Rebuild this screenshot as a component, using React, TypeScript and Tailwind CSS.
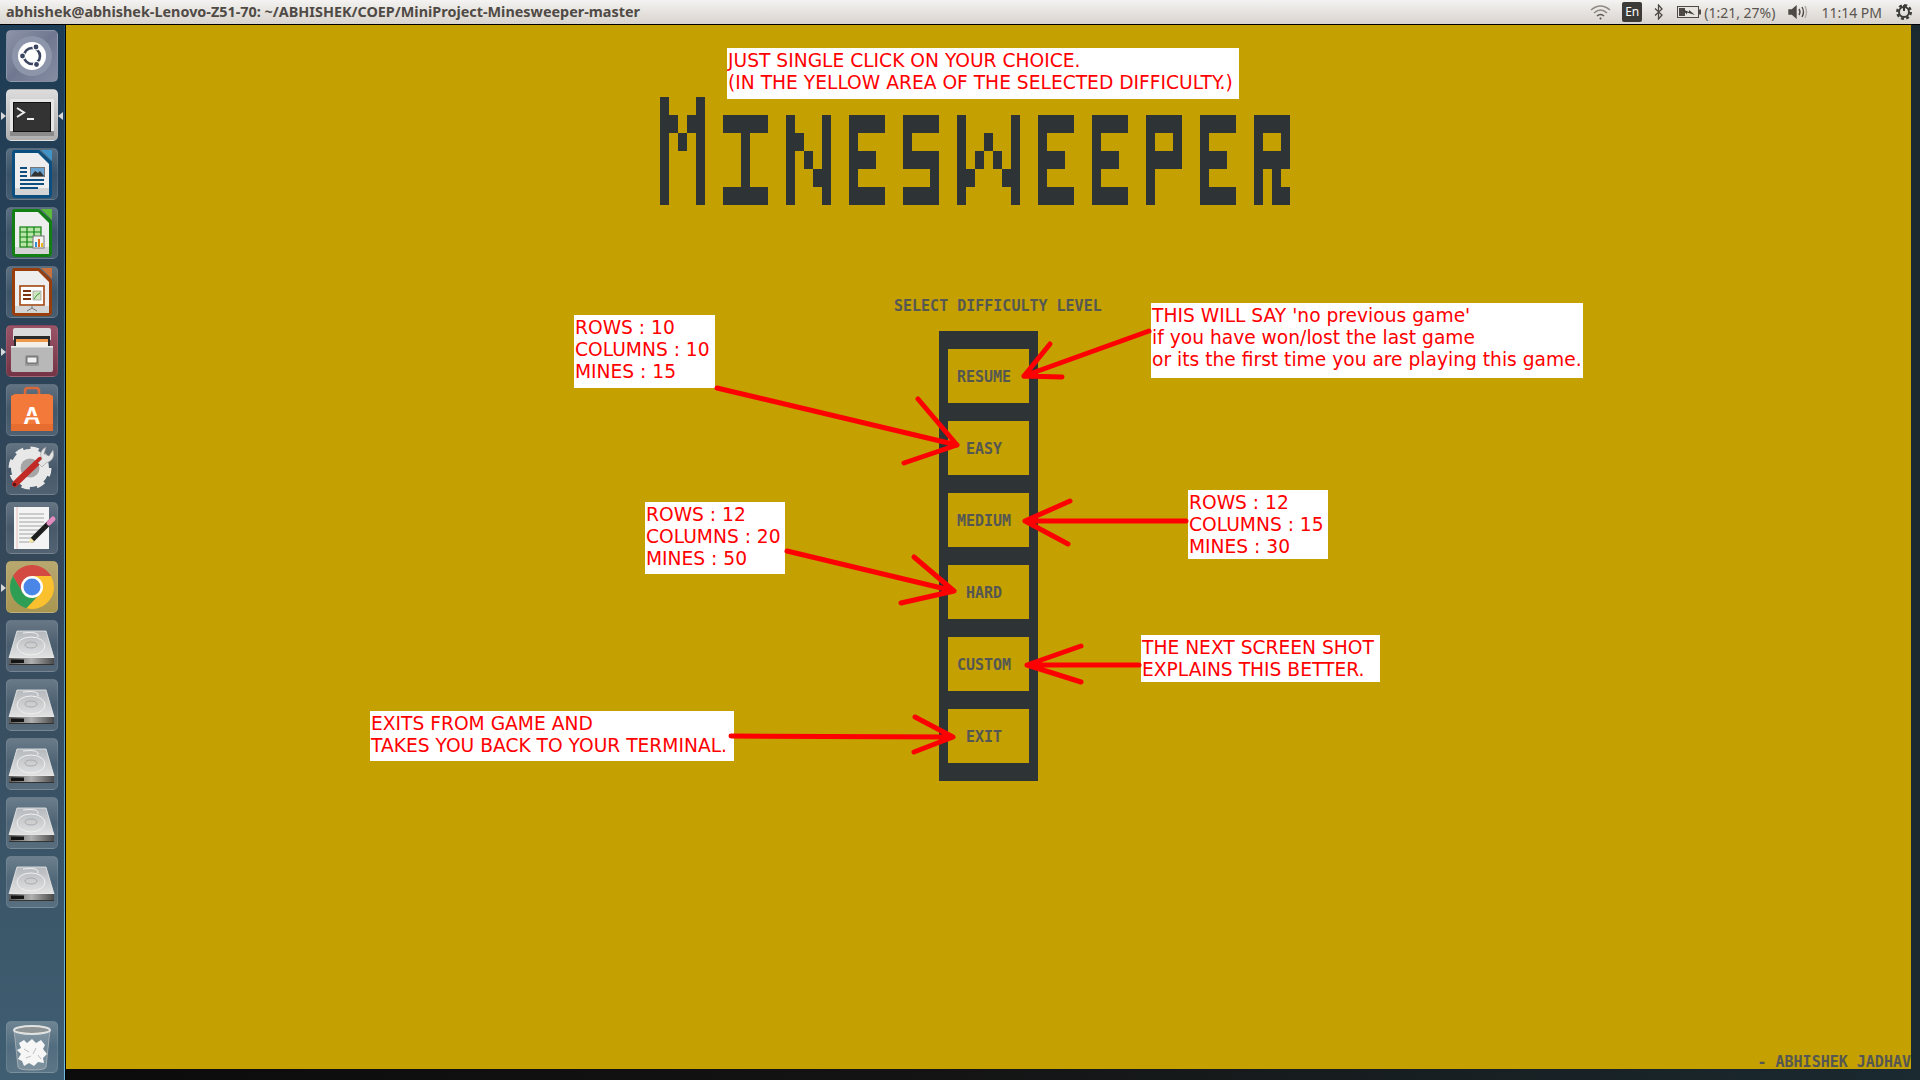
import React from 'react';

const GLYPHS: Record<string, string[]> = {
  M: ['#...#', '##.##', '#.#.#', '#...#', '#...#', '#...#'],
  I: ['.....', '#####', '..#..', '..#..', '..#..', '#####'],
  N: ['.....', '#...#', '##..#', '#.#.#', '#..##', '#...#'],
  E: ['....', '####', '#...', '###.', '#...', '####'],
  S: ['....', '####', '#...', '####', '...#', '####'],
  W: ['.......', '#.....#', '#..#..#', '#.#.#.#', '##...##', '#.....#'],
  P: ['....', '####', '#..#', '####', '#...', '#...'],
  R: ['....', '####', '#..#', '####', '#.#.', '#.##'],
};

const word = 'MINESWEEPER'.split('');
const titleCells = [0, 1, 2, 3, 4, 5]
  .map((row) => word.map((ch) => GLYPHS[ch][row]).join('..'))
  .join('')
  .split('');

const MENU = ['RESUME', 'EASY', 'MEDIUM', 'HARD', 'CUSTOM', 'EXIT'];

const ARROWS = [
  'M1149 331 L1024 376 M1024 376 L1050 344 M1024 376 L1062 377',
  'M717 388 L957 445 M957 445 L918 399 M957 445 L904 463',
  'M1186 521 L1025 521 M1025 521 L1070 501 M1025 521 L1068 544',
  'M787 551 L954 591 M954 591 L914 557 M954 591 L901 603',
  'M1139 665 L1027 665 M1027 665 L1081 646 M1027 665 L1081 682',
  'M731 736 L953 737 M953 737 L915 717 M953 737 L914 752',
];

const Note: React.FC<{ className: string; children: React.ReactNode }> = ({ className, children }) => (
  <div className={`absolute bg-white text-[#ff0000] font-['DejaVu_Sans',sans-serif] text-[18.67px] leading-[22px] whitespace-pre ${className}`}>
    {children}
  </div>
);

const Tile: React.FC<{ tone?: string; pip?: boolean; rpip?: boolean; children: React.ReactNode }> = ({ tone, pip, rpip, children }) => (
  <div className={`relative w-[52px] h-[52px] shrink-0 rounded-[5px] border border-white/10 ${tone ?? 'bg-linear-to-b from-white/25 via-white/10 to-white/15'}`}>
    {pip && <div className="absolute left-[-6px] top-[22px] border-y-[4px] border-y-transparent border-l-[5px] border-l-[#d8d8d8]" />}
    {rpip && <div className="absolute right-[-6px] top-[22px] border-y-[4px] border-y-transparent border-r-[5px] border-r-[#d8d8d8]" />}
    <svg viewBox="0 0 52 52" className="absolute left-[-1px] top-[-1px] w-[52px] h-[52px]">{children}</svg>
  </div>
);

const Doc: React.FC<{ frame: string; corner: string; children: React.ReactNode }> = ({ frame, corner, children }) => (
  <>
    <path d="M8 2 H33 L46 14 V46 Q46 50 42 50 H10 Q6 50 6 46 V6 Q6 2 8 2Z" fill={frame} />
    <path d="M35 2 H46 V13Z" fill={corner} />
    <path d="M9 5 H32 L43 16 V47 H9Z" fill="#eeeeee" />
    <path d="M9 40 H43 V47 H9Z" fill="#d4d4d4" />
    {children}
  </>
);

const Hdd = () => (
  <>
    <defs>
      <linearGradient id="hddPlate" x1="0" y1="0" x2="0" y2="1">
        <stop offset="0" stopColor="#b4b8bc" />
        <stop offset="1" stopColor="#e2e2e2" />
      </linearGradient>
      <linearGradient id="hddBase" x1="0" y1="0" x2="1" y2="0">
        <stop offset="0" stopColor="#5a5a5a" />
        <stop offset="0.5" stopColor="#b0b0b0" />
        <stop offset="1" stopColor="#4a4a4a" />
      </linearGradient>
    </defs>
    <path d="M11 11 H40 L48 38 H3Z" fill="url(#hddPlate)" />
    <path d="M11 11 H40 L48 38 H3Z" fill="none" stroke="#eeeeee" strokeWidth="0.8" />
    <ellipse cx="25" cy="26" rx="14" ry="9" fill="none" stroke="#f0f0f0" strokeWidth="1" />
    <ellipse cx="25" cy="25" rx="6" ry="3" fill="none" stroke="#a8aaac" strokeWidth="1" />
    <path d="M17 13 Q34 11 32 17" fill="none" stroke="#f0f0f0" strokeWidth="1" />
    <rect x="3" y="38" width="45" height="6" fill="url(#hddBase)" />
    <rect x="5" y="39.5" width="13" height="3.5" fill="#141414" />
    <rect x="3" y="44" width="45" height="1" fill="#333" />
  </>
);

const Launcher = () => (
  <div className="flex h-full shrink-0">
    <div className="w-16 h-full flex flex-col items-center gap-[7px] pt-[5px] pb-[7px] bg-linear-to-b from-[#1d3c55] via-[#35485a] to-[#3f5e72]">
      <Tile tone="bg-linear-to-br from-[#8e94a8] via-[#6f7890] to-[#858da2]">
        <circle cx="26" cy="26" r="20" fill="#8d95aa" />
        <circle cx="26" cy="26" r="14" fill="#fff" />
        <circle cx="26" cy="26" r="8" fill="none" stroke="#3b4560" strokeWidth="2.6" />
        <circle cx="30" cy="17" r="3.6" fill="#fff" />
        <circle cx="30" cy="17" r="2.4" fill="#3b4560" />
        <circle cx="16.5" cy="26" r="3.6" fill="#fff" />
        <circle cx="16.5" cy="26" r="2.4" fill="#3b4560" />
        <circle cx="30.5" cy="34.5" r="3.6" fill="#fff" />
        <circle cx="30.5" cy="34.5" r="2.4" fill="#3b4560" />
      </Tile>
      <Tile tone="bg-linear-to-b from-[#dcdcdc] to-[#aeaeae]" pip rpip>
        <rect x="4" y="10" width="44" height="37" rx="1" fill="#e6e6e6" />
        <rect x="4" y="42" width="44" height="5" fill="#8a8a8a" />
        <rect x="7" y="13" width="38" height="30" fill="#111" />
        <rect x="8" y="14" width="36" height="28" fill="#333" />
        <path d="M11 19 L18 23.5 L11 28" fill="none" stroke="#eee" strokeWidth="2" />
        <rect x="21" y="29" width="7" height="2" fill="#eee" />
      </Tile>
      <Tile>
        <Doc frame="#0b4f80" corner="#3f93c6">
          <path d="M14 20 H21 M14 24 H21 M14 28 H21 M14 32 H38 M14 36 H38 M14 40 H32" stroke="#0f4f80" strokeWidth="2" />
          <rect x="24.5" y="19.5" width="14" height="9" fill="#6aa4d0" stroke="#777" />
          <path d="M25 28 L29 23 L32 25 L34 23 L38 28Z" fill="#333" />
        </Doc>
      </Tile>
      <Tile>
        <Doc frame="#127f12" corner="#5dbb3c">
          <rect x="14" y="20" width="21" height="20" fill="#b8e6a8" stroke="#128012" strokeWidth="1.2" />
          <path d="M14 25 H35 M14 30 H35 M14 35 H35 M21 20 V40 M28 20 V40" stroke="#128012" strokeWidth="1.2" />
          <rect x="27" y="29" width="11" height="12" fill="#f2f2f2" stroke="#777" />
          <rect x="29" y="35" width="2" height="5" fill="#2d8fd0" />
          <rect x="32" y="32" width="2" height="8" fill="#e06b20" />
          <rect x="35" y="36" width="2" height="4" fill="#e8b820" />
        </Doc>
      </Tile>
      <Tile>
        <Doc frame="#983d0c" corner="#c8713c">
          <rect x="14" y="20" width="24" height="19" fill="#fff" stroke="#a3460f" strokeWidth="1.6" />
          <path d="M17 25 H25 M17 29 H25 M17 33 H25" stroke="#7c3410" strokeWidth="2" />
          <rect x="27" y="25" width="8" height="9" fill="#cfe4c0" stroke="#888" strokeWidth="0.6" />
          <path d="M28 33 L31 29 L34 27" stroke="#3d9a34" strokeWidth="1" fill="none" />
          <path d="M26 39 V42 M26 42 L21 45 M26 42 L31 45" stroke="#777" strokeWidth="1" fill="none" />
        </Doc>
      </Tile>
      <Tile tone="bg-linear-to-b from-[#9a5468] to-[#743446]" pip>
        <path d="M7 5 Q7 3 9 3 H43 Q45 3 45 5 V15 H7Z" fill="#dadada" />
        <rect x="8" y="11" width="36" height="11" fill="#2a2a2a" />
        <rect x="10" y="14" width="32" height="3" fill="#ee9a4a" />
        <rect x="10" y="17" width="32" height="4" fill="#f4f0e8" />
        <path d="M5 22 H47 V45 Q47 47 45 47 H7 Q5 47 5 45Z" fill="#b8b8b8" />
        <rect x="5" y="21" width="42" height="1.5" fill="#eee" />
        <rect x="19" y="30" width="14" height="11" rx="1.5" fill="#999" />
        <rect x="21" y="32" width="10" height="6" fill="#f0f0f0" stroke="#444" strokeWidth="0.7" />
      </Tile>
      <Tile>
        <path d="M19 14 V7 Q19 4 22 4 H30 Q33 4 33 7 V14" fill="none" stroke="#d8693a" strokeWidth="2.6" />
        <path d="M5 12 L9 10 H43 L47 12 V47 H5Z" fill="#f2793a" />
        <rect x="5" y="40" width="42" height="7" fill="#e66c30" />
        <text x="26" y="40" textAnchor="middle" fill="#fff" fontSize="24" fontWeight="700" fontFamily="'Liberation Sans',sans-serif">A</text>
        <rect x="15" y="32" width="22" height="1.4" fill="#f2793a" />
      </Tile>
      <Tile>
        <circle cx="24" cy="25" r="14" fill="none" stroke="#e8e8e8" strokeWidth="10" />
        <circle cx="24" cy="25" r="19" fill="none" stroke="#e8e8e8" strokeWidth="5" strokeDasharray="8 6.9" />
        <circle cx="24" cy="25" r="9.5" fill="#a6a6a6" />
        <path d="M9 41 L34 17" stroke="#c22a26" strokeWidth="6" strokeLinecap="round" />
        <circle cx="8.5" cy="41.5" r="1.8" fill="#5a1414" />
        <path d="M32 20 L36 16 Q32 8 40 4 L38 11 L43 13 L47 7 Q50 17 40 20 L36 24Z" fill="#e4e4e4" stroke="#999" strokeWidth="0.6" />
      </Tile>
      <Tile>
        <rect x="8" y="5" width="35" height="42" fill="#f4f4f4" />
        <path d="M11 5 V47" stroke="#e8b0b0" strokeWidth="0.8" />
        <path d="M13 12 H38 M13 16 H38 M13 20 H38 M13 24 H38 M13 28 H34 M13 32 H30 M13 36 H25 M13 40 H28" stroke="#8f8f8f" strokeWidth="0.8" />
        <path d="M26 38 L46 18" stroke="#1e1e1e" strokeWidth="5" />
        <path d="M43 21 L47 17" stroke="#e28cc0" strokeWidth="5" strokeLinecap="round" />
        <path d="M23 41 L24.5 35.5 L28.5 39.5Z" fill="#f4e6a0" />
      </Tile>
      <Tile tone="bg-linear-to-b from-[#b8a870] to-[#a89650]" pip>
        <path d="M26 15 H45.05 A22 22 0 0 0 6.95 15 L16.5 31.5 L26 26Z" fill="#d24a41" />
        <path d="M45.05 15 A22 22 0 0 1 20.3 47.2 L35.5 31 L26 15Z" fill="#fbc02d" />
        <path d="M6.95 15 A22 22 0 0 0 20.3 47.2 L35.5 31 L26 37 L16.5 31.5Z" fill="#2e9e54" />
        <circle cx="26" cy="26" r="11" fill="#fff" />
        <circle cx="26" cy="26" r="8.5" fill="#4a86e8" />
      </Tile>
      <Tile><Hdd /></Tile>
      <Tile><Hdd /></Tile>
      <Tile><Hdd /></Tile>
      <Tile><Hdd /></Tile>
      <Tile><Hdd /></Tile>
      <div className="mt-auto">
        <Tile>
          <path d="M8 9 L12 46 Q12 49 26 49 Q40 49 40 46 L44 9Z" fill="#ffffff" fillOpacity="0.2" stroke="#c8c8c8" strokeOpacity="0.6" />
          <path d="M13 22 L18 19 L21 22 L26 18 L30 22 L35 19 L39 24 L37 28 L41 33 L37 37 L38 42 L32 41 L28 45 L23 42 L18 45 L16 40 L12 38 L15 33 L11 29 L15 27Z" fill="#f6f6f6" />
          <path d="M18 28 L23 31 M30 27 L27 33 M20 37 L25 35 M32 34 L35 38" stroke="#bdbdbd" strokeWidth="1" />
          <ellipse cx="26" cy="9" rx="18" ry="4" fill="#8f9496" stroke="#e2e2e2" strokeWidth="2" />
        </Tile>
      </div>
    </div>
    <div className="w-px h-full bg-linear-to-b from-[#1f4f70] via-[#4e8fae] to-[#6cc0de]" />
    <div className="w-px h-full bg-black" />
  </div>
);

const TopPanel = () => (
  <div className="h-[25px] shrink-0 flex items-center bg-linear-to-b from-[#f4f3f1] to-[#d8d3cd] border-b border-black font-['Noto_Sans',sans-serif] text-[#5a5550]">
    <div className="ml-[6px] text-[14.4px] font-bold text-[#4f4a45] whitespace-nowrap">abhishek@abhishek-Lenovo-Z51-70: ~/ABHISHEK/COEP/MiniProject-Minesweeper-master</div>
    <div className="ml-auto flex items-center pr-[8px] text-[14px] whitespace-nowrap">
      <svg viewBox="0 0 21 16" className="w-[21px] h-[16px]" fill="none" stroke="#8f8a84" strokeWidth="1.6">
        <path d="M1 6 Q10.5 -2 20 6" />
        <path d="M4 9 Q10.5 3 17 9" />
        <path d="M7 12 Q10.5 9 14 12" stroke="#5a5550" />
        <circle cx="10.5" cy="14.5" r="1" fill="#4f4a45" stroke="none" />
      </svg>
      <div className="ml-[11px] w-[20px] h-[20px] rounded-[2px] bg-[#3c3b37] text-white text-[12px] flex items-center justify-center">En</div>
      <svg viewBox="0 0 9 16" className="ml-[12px] w-[9px] h-[16px]" fill="none" stroke="#4f4a45" strokeWidth="1.3">
        <path d="M1 4.5 L8 11 L4.5 15 V1 L8 5 L1 11.5" />
      </svg>
      <svg viewBox="0 0 25 12" className="ml-[14px] w-[25px] h-[12px]">
        <rect x="0.5" y="0.5" width="21" height="11" fill="#e8e5e1" stroke="#4f4a45" />
        <rect x="2" y="2" width="6" height="8" fill="#4f4a45" />
        <path d="M5 3 L12 6 L12 4 L18 9 L10 6.5 L10 8.5Z" fill="#3c3b37" />
        <rect x="22" y="3.5" width="2" height="5" fill="#4f4a45" />
      </svg>
      <span className="ml-[2px]">(1:21, 27%)</span>
      <svg viewBox="0 0 20 14" className="ml-[13px] w-[20px] h-[14px]" fill="none" stroke="#4f4a45" strokeWidth="1.4">
        <path d="M1 5 H4 L8 1.5 V12.5 L4 9 H1Z" fill="#4f4a45" />
        <path d="M11 4 Q13 7 11 10" />
        <path d="M14 2 Q17 7 14 12" />
        <path d="M17 1 Q20 7 17 13" stroke="#b0aba5" />
      </svg>
      <span className="ml-[13px]">11:14 PM</span>
      <svg viewBox="0 0 16 16" className="ml-[14px] w-[16px] h-[16px]" fill="none" stroke="#3c3b37">
        <circle cx="8" cy="8" r="5" strokeWidth="2" />
        <circle cx="8" cy="8" r="6.8" strokeWidth="2.4" strokeDasharray="3 2.34" />
        <path d="M8 1 V7" strokeWidth="2" />
      </svg>
    </div>
  </div>
);

export default function App() {
  return (
    <div className="relative w-[1920px] h-[1080px] overflow-hidden flex flex-col bg-linear-to-r from-[#0b0b0b] via-[#141414] to-[#1a2a30]">
      <TopPanel />
      <div className="flex-1 min-h-0 flex">
        <Launcher />
        <div className="flex-1 min-w-0 h-[1044px] mr-[9px] flex flex-col bg-[#c4a000] font-['DejaVu_Sans_Mono',monospace] font-bold text-[15px] leading-[18px] text-[#555753]">
          <div role="img" aria-label="MINESWEEPER" className="mt-[72px] ml-[594px] w-[630px] grid grid-cols-[repeat(70,minmax(0,1fr))] auto-rows-[18px]">
            {titleCells.map((c, i) => (
              <div key={i} className={c === '#' ? 'bg-[#2e3436]' : ''} />
            ))}
          </div>
          <div className="mt-[92px] ml-[828px] whitespace-pre">SELECT DIFFICULTY LEVEL</div>
          <div className="mt-[16px] self-center w-[99px] flex flex-col gap-[18px] py-[18px] px-[9px] bg-[#2e3436]">
            {MENU.map((label) => (
              <div key={label} className="h-[54px] pr-[9px] pt-[2px] flex items-center justify-center bg-[#c4a000]">{label}</div>
            ))}
          </div>
          <div className="mt-auto self-end h-[16px] whitespace-pre">- ABHISHEK JADHAV</div>
        </div>
      </div>

      <Note className="left-[727px] top-[48px] w-[512px] h-[51px] pl-px pt-[2px]">{'JUST SINGLE CLICK ON YOUR CHOICE.\n(IN THE YELLOW AREA OF THE SELECTED DIFFICULTY.)'}</Note>
      <Note className="left-[574px] top-[315px] w-[141px] h-[73px] pl-px pt-[2px]">{'ROWS : 10\nCOLUMNS : 10\nMINES : 15'}</Note>
      <Note className="left-[645px] top-[502px] w-[140px] h-[72px] pl-px pt-[2px]">{'ROWS : 12\nCOLUMNS : 20\nMINES : 50'}</Note>
      <Note className="left-[1151px] top-[303px] w-[432px] h-[75px] pl-px pt-[2px]">{"THIS WILL SAY 'no previous game'\nif you have won/lost the last game\nor its the first time you are playing this game."}</Note>
      <Note className="left-[1188px] top-[490px] w-[140px] h-[69px] pl-px pt-[2px]">{'ROWS : 12\nCOLUMNS : 15\nMINES : 30'}</Note>
      <Note className="left-[1141px] top-[635px] w-[239px] h-[47px] pl-px pt-[2px]">{'THE NEXT SCREEN SHOT\nEXPLAINS THIS BETTER.'}</Note>
      <Note className="left-[370px] top-[711px] w-[364px] h-[50px] pl-px pt-[2px]">{'EXITS FROM GAME AND\nTAKES YOU BACK TO YOUR TERMINAL.'}</Note>

      <svg viewBox="0 0 1920 1080" className="absolute left-0 top-0 w-[1920px] h-[1080px] pointer-events-none" fill="none" stroke="#ff0000" strokeWidth="5" strokeLinecap="round">
        {ARROWS.map((d) => <path key={d} d={d} />)}
      </svg>
    </div>
  );
}
